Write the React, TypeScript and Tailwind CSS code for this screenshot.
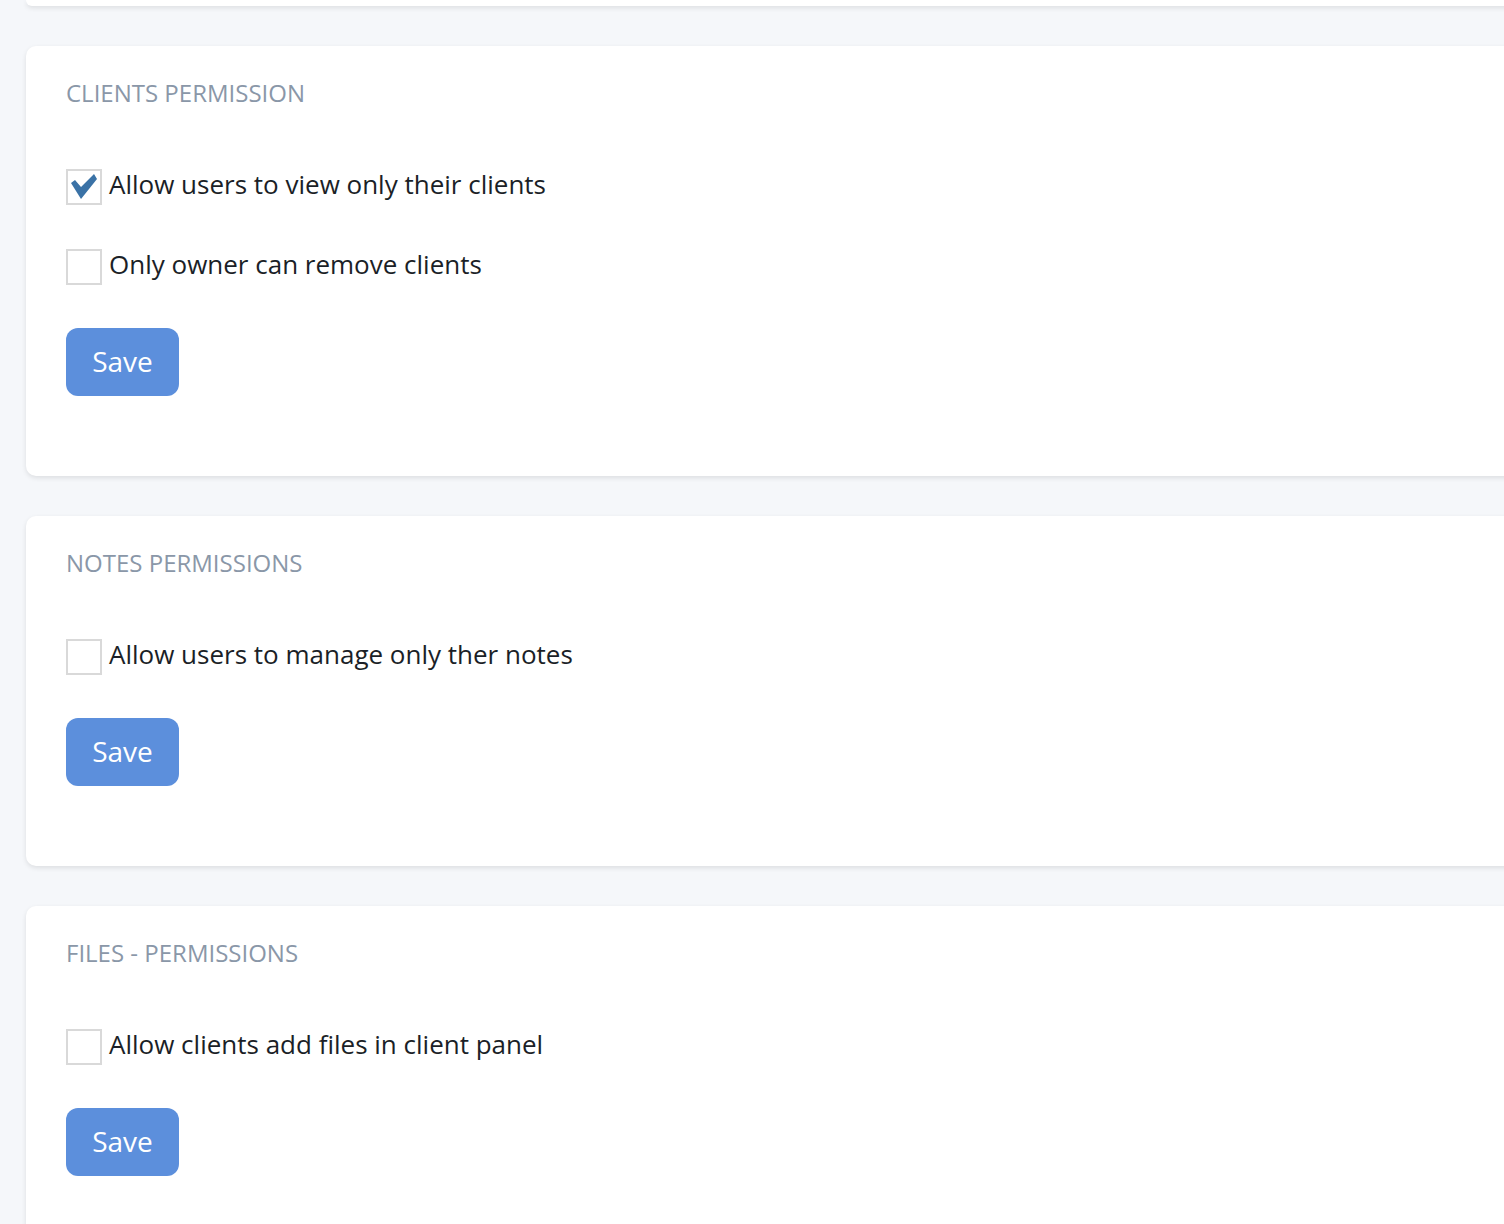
const sections = [
  {
    title: "Clients permission",
    options: [
      { label: "Allow users to view only their clients", checked: true },
      { label: "Only owner can remove clients", checked: false },
    ],
  },
  {
    title: "Notes permissions",
    options: [{ label: "Allow users to manage only ther notes", checked: false }],
  },
  {
    title: "Files - permissions",
    options: [{ label: "Allow clients add files in client panel", checked: false }],
  },
];

function Checkbox({ checked }: { checked: boolean }) {
  return (
    <span className="relative block h-[36px] w-[36px] shrink-0 border-2 border-[#d9d9d9] bg-white">
      {checked && (
        <svg className="absolute left-[-2px] top-[-2px]" width="36" height="36" viewBox="0 0 36 36">
          <polygon points="5,14 9,11 15,18 28,5 31,10 15,30" fill="#3a72a6" />
        </svg>
      )}
    </span>
  );
}

function Section({ title, options }: (typeof sections)[number]) {
  return (
    <div className="w-[1520px] rounded-[10px] bg-white pl-10 pt-[33px] pb-[80px] shadow-[0_2px_5px_rgba(0,0,0,0.1)]">
      <h2 className="text-[24px] leading-[28px] uppercase text-[#8a97a8]">{title}</h2>
      <div className="mt-[62px] flex flex-col gap-[44px]">
        {options.map((o) => (
          <label key={o.label} className="flex items-start gap-[7px] text-[26px] text-[#1b1f27]">
            <Checkbox checked={o.checked} />
            {/* label text sits a touch above the box centre */}
            <span className="leading-[30px]">{o.label}</span>
          </label>
        ))}
      </div>
      <button className="mt-[43px] h-[68px] w-[113px] rounded-[12px] bg-[#5c8fdc] pb-[2px] text-[28px] text-white">
        Save
      </button>
    </div>
  );
}

export default function App() {
  return (
    <div className="min-h-screen overflow-hidden bg-[#f5f7fa] pl-[26px] font-['Open_Sans',sans-serif]">
      <div className="flex flex-col gap-10">
        {/* tail of the card above, scrolled mostly out of view */}
        <div className="h-[6px] w-[1520px] rounded-b-[10px] bg-white shadow-[0_2px_5px_rgba(0,0,0,0.1)]" />
        {sections.map((s) => (
          <Section key={s.title} {...s} />
        ))}
      </div>
    </div>
  );
}
